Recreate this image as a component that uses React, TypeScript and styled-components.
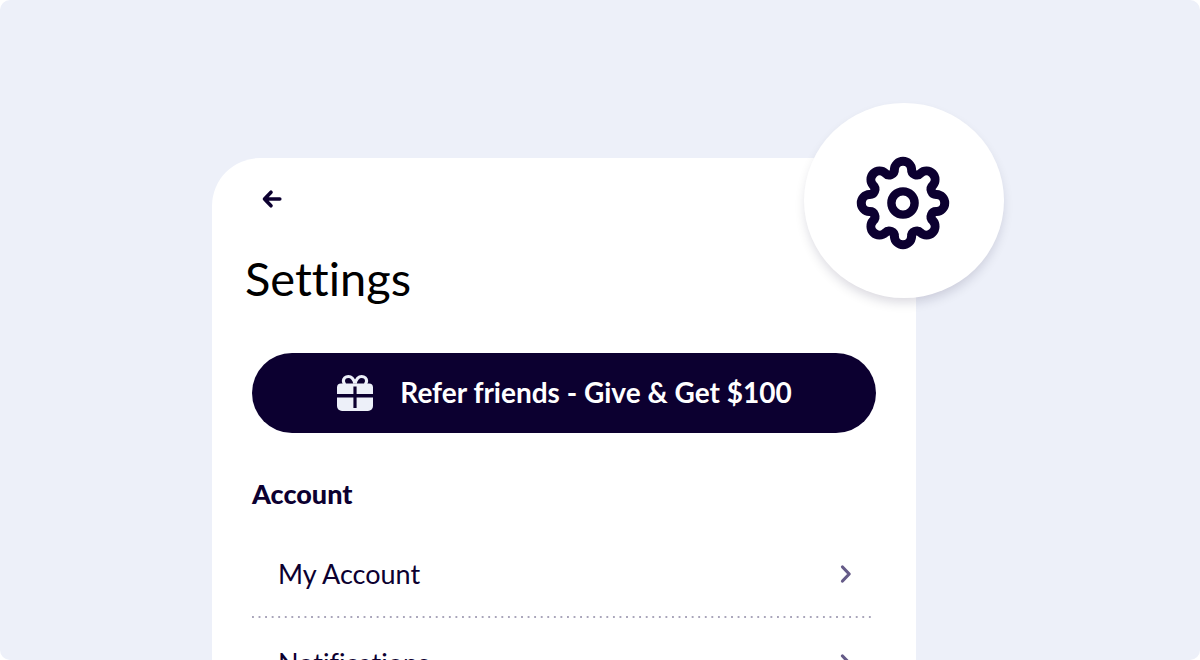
import React from "react";
import styled, { createGlobalStyle } from "styled-components";

const ink = "#0c0030";
const mist = "#edf0f9";

const GlobalStyle = createGlobalStyle`
  *, *::before, *::after { box-sizing: border-box; }
  body {
    margin: 0;
    background: #fff;
    font-family: Lato, "Open Sans", sans-serif;
    font-variant-ligatures: none;
    color: ${ink};
  }
`;

const Stage = styled.main`
  height: 100vh;
  overflow: hidden;
  padding: 158px 284px 0 212px;
  border-radius: 10px;
  background: ${mist};
`;

const Card = styled.section`
  position: relative;
  min-height: 100%;
  padding: 28px 40px 40px;
  border-radius: 48px 48px 0 0;
  background: #fff;
`;

const BackButton = styled.button`
  display: block;
  width: 26px;
  height: 26px;
  margin-left: 7px;
  padding: 0;
  border: 0;
  background: none;
  color: ${ink};
  cursor: pointer;
`;

const Title = styled.h1`
  margin: 38px 0 0 -7px;
  font-size: 47px;
  line-height: 56px;
  font-weight: 400;
  color: #000;
`;

const ReferButton = styled.button`
  display: flex;
  align-items: center;
  justify-content: center;
  gap: 26px;
  width: 100%;
  height: 80px;
  margin-top: 47px;
  padding: 0;
  border: 0;
  border-radius: 40px;
  background: ${ink};
  color: #fff;
  font: inherit;
  font-variant-ligatures: none;
  font-size: 28px;
  line-height: 36px;
  font-weight: 700;
  cursor: pointer;
`;

const ReferLabel = styled.span`
  padding-bottom: 2px;
`;

const GroupTitle = styled.h2`
  margin: 43px 0 0;
  font-size: 27px;
  line-height: 36px;
  font-weight: 900;
`;

const List = styled.ul`
  margin: 17px 3px 0 0;
  padding: 0;
  list-style: none;
`;

const Item = styled.li`
  padding-bottom: 2px;
  background: radial-gradient(circle at 1px 1px, #a9a5ba 0, #a9a5ba 1px, transparent 1px) left bottom /
    calc(200% / 189) 2px repeat-x;
`;

const ItemLink = styled.a`
  display: flex;
  align-items: center;
  justify-content: space-between;
  height: 87px;
  padding: 2px 21px 0 26px;
  color: inherit;
  font-size: 27px;
  line-height: 36px;
  text-decoration: none;
`;

const Badge = styled.button`
  position: absolute;
  top: -55px;
  right: -88px;
  display: grid;
  place-items: center;
  width: 200px;
  height: 195px;
  padding: 5px 2px 0 0;
  border: 0;
  border-radius: 50%;
  background: #fff;
  box-shadow: 0 6px 12px -2px rgba(12, 0, 48, 0.16);
  color: ${ink};
  cursor: pointer;
`;

function gearOutline(): string {
  const lobeDistance = 34;
  const lobeRadius = 8.6;
  const valleyDistance = 36;
  const polar = (r: number, a: number) => [r * Math.sin(a), -r * Math.cos(a)];
  const step = Math.PI / 4;
  const [vx, vy] = polar(valleyDistance, step / 2);
  const reach = Math.hypot(vx, vy + lobeDistance);
  const valleyRadius = reach - lobeRadius;
  const t = lobeRadius / reach;
  const joinX = vx * t;
  const joinY = -lobeDistance + (vy + lobeDistance) * t;
  const turn = (x: number, y: number, a: number) =>
    `${(x * Math.cos(a) - y * Math.sin(a)).toFixed(2)} ${(x * Math.sin(a) + y * Math.cos(a)).toFixed(2)}`;
  let d = `M${turn(-joinX, joinY, 0)}`;
  for (let i = 0; i < 8; i++) {
    d += `A${lobeRadius} ${lobeRadius} 0 0 1 ${turn(joinX, joinY, i * step)}`;
    d += `A${valleyRadius} ${valleyRadius} 0 0 0 ${turn(-joinX, joinY, (i + 1) * step)}`;
  }
  return d + "Z";
}

const GearIcon = () => (
  <svg width="96" height="96" viewBox="-48 -48 96 96" fill="none" stroke="currentColor" strokeWidth="9" aria-hidden="true">
    <path d={gearOutline()} strokeLinejoin="round" />
    <circle r="11.6" strokeWidth="8.4" />
  </svg>
);

const ArrowIcon = () => (
  <svg width="26" height="26" viewBox="0 0 26 26" fill="none" stroke="currentColor" strokeWidth="3.6" strokeLinecap="round" strokeLinejoin="round" aria-hidden="true">
    <path d="M20.800 13H5.500M12 6.200L5.500 13l6.500 6.800" />
  </svg>
);

const GiftIcon = () => (
  <svg width="38" height="38" viewBox="0 0 38 38" aria-hidden="true">
    <path d="M5 9.5H33a4 4 0 0 1 4 4V20H1v-6.500a4 4 0 0 1 4-4Z" fill={mist} />
    <path d="M1 23.500H37v8.500a5 5 0 0 1-5 5H6a5 5 0 0 1-5-5Z" fill={mist} />
    <path d="M19 9.500C17.500 4.500 15.200 2.500 12.400 2.500C9.300 2.500 7.400 4.800 7.400 7C7.400 8.500 8 9.500 9 10.500M19 9.500C20.500 4.500 22.800 2.500 25.600 2.500C28.700 2.500 30.600 4.800 30.600 7C30.600 8.500 30 9.500 29 10.500" fill="none" stroke={mist} strokeWidth="3.2" />
    <path d="M19 12.500V34" stroke={ink} strokeWidth="3.200" />
  </svg>
);

const ChevronIcon = () => (
  <svg width="12" height="20" viewBox="0 0 12 20" fill="none" stroke="#655b88" strokeWidth="3.2" strokeLinecap="round" strokeLinejoin="round" aria-hidden="true">
    <path d="M2.500 3L9.200 10l-6.700 7" />
  </svg>
);

const accountItems = ["My Account", "Notifications"];

export default function App() {
  return (
    <>
      <GlobalStyle />
      <Stage>
        <Card>
          <BackButton type="button" aria-label="Back">
            <ArrowIcon />
          </BackButton>
          <Title>Settings</Title>
          <ReferButton type="button">
            <GiftIcon />
            <ReferLabel>Refer friends - Give &amp; Get $100</ReferLabel>
          </ReferButton>
          <GroupTitle>Account</GroupTitle>
          <List>
            {accountItems.map((label) => (
              <Item key={label}>
                <ItemLink href="#">
                  {label}
                  <ChevronIcon />
                </ItemLink>
              </Item>
            ))}
          </List>
          <Badge type="button" aria-label="Open settings">
            <GearIcon />
          </Badge>
        </Card>
      </Stage>
    </>
  );
}
